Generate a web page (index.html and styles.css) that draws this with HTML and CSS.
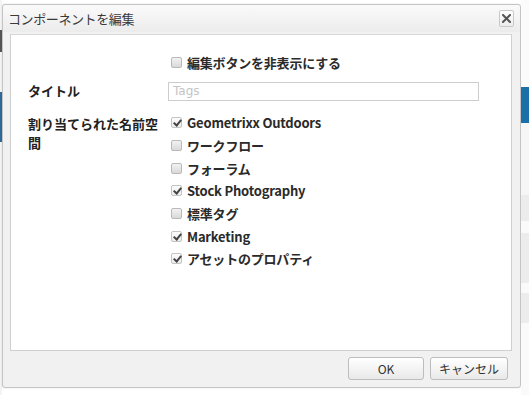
FILE: index.html
```html
<!DOCTYPE html>
<html lang="ja">
<head>
<meta charset="utf-8">
<title>コンポーネントを編集</title>
<link rel="stylesheet" href="styles.css">
</head>
<body>
<div class="page">
  <div class="edge-left">
    <div class="el-a"></div>
    <div class="el-b"></div>
    <div class="el-c"></div>
  </div>
  <div class="dialog">
    <div class="header">
      <span class="title">コンポーネントを編集</span>
      <button class="close" aria-label="閉じる">
        <svg width="9" height="9" viewBox="0 0 9 9"><path d="M1 1L8 8M8 1L1 8" stroke="#555" stroke-width="2" stroke-linecap="square"/></svg>
      </button>
    </div>
    <div class="panel">
      <div class="form">
        <div class="label"></div>
        <div class="field">
          <label class="cb"><span class="box"></span><span>編集ボタンを非表示にする</span></label>
        </div>
        <div class="label lbl-title">タイトル</div>
        <div class="field field-input">
          <input class="text" type="text" placeholder="Tags">
        </div>
        <div class="label lbl-ns">割り当てられた名前空<br>間</div>
        <div class="field list">
          <label class="cb"><span class="box checked"></span><span>Geometrixx Outdoors</span></label>
          <label class="cb"><span class="box"></span><span>ワークフロー</span></label>
          <label class="cb"><span class="box"></span><span>フォーラム</span></label>
          <label class="cb"><span class="box checked"></span><span>Stock Photography</span></label>
          <label class="cb"><span class="box"></span><span>標準タグ</span></label>
          <label class="cb"><span class="box checked"></span><span>Marketing</span></label>
          <label class="cb"><span class="box checked"></span><span>アセットのプロパティ</span></label>
        </div>
      </div>
    </div>
    <div class="footer">
      <button class="btn btn-ok">OK</button>
      <button class="btn btn-cancel">キャンセル</button>
    </div>
  </div>
  <div class="edge-right">
    <div class="er-1"></div>
    <div class="er-blue"></div>
    <div class="er-2"></div>
    <div class="er-3"></div>
    <div class="er-4"></div>
    <div class="er-5"></div>
    <div class="er-6"></div>
    <div class="er-7"></div>
    <div class="er-8"></div>
  </div>
</div>
</body>
</html>
```
FILE: styles.css
```css
html, body {
  margin: 0;
  padding: 0;
  background: #ffffff;
}
body {
  width: 529px;
  height: 395px;
  overflow: hidden;
  font-family: "Noto Sans CJK JP", "DejaVu Sans", sans-serif;
}
.page {
  display: flex;
  height: 395px;
}
.edge-left {
  width: 2px;
  display: flex;
  flex-direction: column;
  background: #f4f4f4;
}
.el-a { height: 30px; }
.el-b { height: 22px; background: #555; }
.el-c { height: 50px; margin-top: 40px; background: #2f6a9a; }
.dialog {
  width: 519px;
  height: 384px;
  margin-top: 4px;
  box-sizing: border-box;
  border: 1px solid #c4c4c4;
  border-radius: 3px;
  background: #f1f1f1;
  display: flex;
  flex-direction: column;
  box-shadow: 0 0 2px rgba(0,0,0,0.12);
}
.header {
  height: 27px;
  flex: none;
  display: flex;
  align-items: center;
  justify-content: space-between;
  padding: 0 5px 0 5px;
  background: linear-gradient(#fafafa, #ececec);
  border-radius: 3px 3px 0 0;
}
.title {
  font-size: 13px;
  color: #3a3a3a;
  letter-spacing: -0.4px;
}
.close {
  width: 15px;
  height: 17px;
  padding: 0;
  margin: 0 1px 0 0;
  border: 1px solid #c9c9c9;
  border-radius: 2px;
  background: linear-gradient(#ffffff, #ececec);
  display: flex;
  align-items: center;
  justify-content: center;
}
.panel {
  flex: none;
  height: 317px;
  margin: 2px 8px 0 7px;
  box-sizing: border-box;
  background: #ffffff;
  border: 1px solid #cfcfcf;
  border-top-color: #d8d8d8;
}
.form {
  display: grid;
  grid-template-columns: 140px 1fr;
  padding: 16px 0 0 17px;
}
.label {
  font-size: 13px;
  font-weight: bold;
  color: #222;
  line-height: 19px;
}
.cb {
  display: flex;
  align-items: center;
  height: 22.67px;
  font-size: 13px;
  font-weight: bold;
  color: #2a2a2a;
  letter-spacing: -0.2px;
}
.box {
  width: 11px;
  height: 11px;
  box-sizing: border-box;
  border: 1px solid #b9b9b9;
  border-radius: 2px;
  background: linear-gradient(#f2f2f2, #d9d9d9);
  margin: 0 5px 0 3px;
  flex: none;
  position: relative;
}
.box.checked {
  background: linear-gradient(#fcfcfc, #ececec);
  border-color: #c4c4c4;
}
.box.checked::after {
  content: "";
  position: absolute;
  left: 3px;
  top: 0px;
  width: 3px;
  height: 6px;
  border-right: 2px solid #444;
  border-bottom: 2px solid #444;
  transform: rotate(40deg);
}
.field-input {
  padding-top: 8px;
  height: 38px;
  box-sizing: border-box;
}
.lbl-title {
  padding-top: 7px;
}
.text {
  display: block;
  width: 311px;
  height: 19px;
  box-sizing: border-box;
  border: 1px solid #cdcdcd;
  padding: 0 4px;
  font-family: "DejaVu Sans", sans-serif;
  font-size: 12px;
  color: #333;
  background: #fff;
  outline: none;
}
.text::placeholder {
  color: #c4c4c4;
}
.lbl-ns {
  padding-top: 2px;
  line-height: 19px;
}
.footer {
  flex: 1;
  display: flex;
  justify-content: flex-end;
  align-items: center;
  gap: 6px;
  padding: 0 12px 2px 0;
}
.btn {
  height: 23px;
  box-sizing: border-box;
  border: 1px solid #bdbdbd;
  border-radius: 3px;
  background: linear-gradient(#ffffff, #e9e9e9);
  font-family: "Noto Sans CJK JP", "DejaVu Sans", sans-serif;
  font-size: 12px;
  color: #333;
  padding: 0;
}
.btn-ok { width: 76px; }
.btn-cancel { width: 78px; }
.edge-right {
  width: 8px;
  display: flex;
  flex-direction: column;
  background: #fafafa;
}
.er-1 { height: 87px; background: #fbfbfb; }
.er-blue { height: 36px; background: #1d6fa8; }
.er-2 { height: 72px; background: #f6f6f6; }
.er-3 { height: 26px; background: #ececec; }
.er-4 { height: 12px; background: #fafafa; }
.er-5 { height: 50px; background: #ececec; }
.er-6 { height: 10px; background: #fafafa; }
.er-7 { height: 30px; background: #ececec; }
.er-8 { flex: 1; background: #fafafa; }
```
